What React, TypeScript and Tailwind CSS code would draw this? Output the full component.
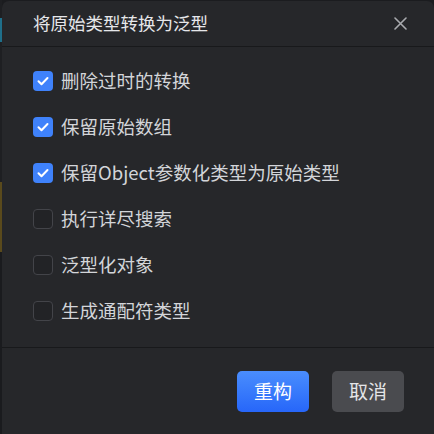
import { useState } from "react";

const options = [
  { label: "删除过时的转换", checked: true },
  { label: "保留原始数组", checked: true },
  { label: "保留Object参数化类型为原始类型", checked: true },
  { label: "执行详尽搜索", checked: false },
  { label: "泛型化对象", checked: false },
  { label: "生成通配符类型", checked: false },
];

const font = { fontFamily: '"Noto Sans CJK SC", "Noto Sans", sans-serif' };

const Check = ({ on }: { on: boolean }) =>
  on ? (
    <span className="flex h-[20px] w-[20px] items-center justify-center rounded-[4px] bg-[#3f82fb]">
      <svg width="14" height="14" viewBox="0 0 14 14" fill="none">
        <path d="M2.5 7.2l3 3 6-6.2" stroke="#fff" strokeWidth="2" strokeLinecap="round" strokeLinejoin="round" />
      </svg>
    </span>
  ) : (
    <span className="h-[20px] w-[20px] rounded-[4px] border border-[#434449] bg-[#222326]" />
  );

const App = () => {
  const [items, setItems] = useState(options);

  return (
    <div className="flex h-screen w-full bg-[#1b1c1f]" style={font}>
      {/* editor peeking out behind the dialog */}
      <div className="flex w-[2px] flex-col">
        <div className="h-[18px] bg-[#1e1f22]" />
        <div className="h-[24px] bg-[#1f6f8a]" />
        <div className="h-[140px] bg-[#1e1f22]" />
        <div className="h-[70px] bg-[#5a4a1c]" />
        <div className="flex-1 bg-[#1a1b1e]" />
      </div>

      <div className="mt-[1px] flex flex-1 flex-col rounded-t-[7px] bg-[#26272a]">
        {/* header */}
        <div className="flex h-[46px] items-center justify-between border-b border-[#18191b] pl-[31px] pr-[27px]">
          <h2 className="text-[17.5px] text-[#e6e7ea]">将原始类型转换为泛型</h2>
          <svg width="13" height="13" viewBox="0 0 13 13">
            <path d="M1 1l11 11M12 1L1 12" stroke="#a9abaf" strokeWidth="1.6" strokeLinecap="round" />
          </svg>
        </div>

        {/* options */}
        <div className="flex flex-col border-b border-[#18191b] pb-[13px] pl-[31px] pt-[11px]">
          {items.map((it, i) => (
            <label
              key={it.label}
              className="flex h-[46px] cursor-pointer items-center gap-[8px]"
              onClick={() =>
                setItems(items.map((x, j) => (j === i ? { ...x, checked: !x.checked } : x)))
              }
            >
              <Check on={it.checked} />
              <span className="text-[18.5px] text-[#d3d5d9]">{it.label}</span>
            </label>
          ))}
        </div>

        {/* footer */}
        <div className="flex justify-end gap-[23px] pr-[30px] pt-[23px]">
          <button className="h-[41px] w-[72px] rounded-[5px] bg-gradient-to-b from-[#4a8dfd] to-[#2766f9] text-[19px] text-white">
            重构
          </button>
          <button className="h-[41px] w-[72px] rounded-[5px] bg-[#4a4b4f] text-[19px] text-[#e4e5e8]">
            取消
          </button>
        </div>
      </div>
    </div>
  );
};

export default App;
